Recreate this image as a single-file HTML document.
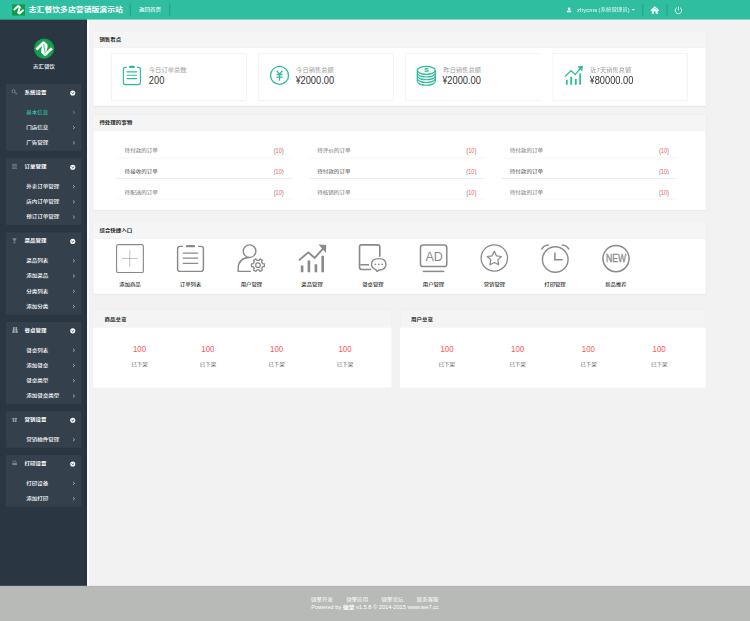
<!DOCTYPE html>
<html lang="zh-CN">
<head>
<meta charset="utf-8">
<title>志汇餐饮多店营销版演示站</title>
<style>
html,body{margin:0;padding:0;background:#f2f2f2;}
body{width:750px;height:621px;overflow:hidden;position:relative;}
#page{position:absolute;left:0;top:0;width:1920px;height:1590px;transform:scale(0.390625);transform-origin:0 0;
 font-family:"Liberation Sans","Noto Sans CJK SC",sans-serif;}
#page div,#page svg{position:absolute;box-sizing:border-box;}
#page svg{overflow:visible;}
#page .t{white-space:nowrap;}
</style>
</head>
<body>
<div id="page">
<div style="left:0px;top:0px;width:1920px;height:1589.76px;background:#f2f2f2;"></div>
<div style="left:0px;top:48.64px;width:222.59px;height:1451.52px;background:linear-gradient(90deg,#2b3643 0,#2b3643 96%,#263140 100%);"></div>
<div style="left:222.59px;top:48.64px;width:5.76px;height:1451.52px;background:#fff;"></div>
<svg style="left:81.92px;top:92.16px;" width="61.44" height="66.56" viewBox="32 36 24 26"><circle cx="44.1" cy="48.65" r="10.1" fill="#12a04a"/><path d="M36.4 49.6 L43.6 42.6" stroke="#fff" stroke-width="2.7" fill="none"/><path d="M43.5 40.9 L47.5 44.6 L47.5 47.4 L45.0 56.6 L41.2 52.9 L41.2 49.6 Z" fill="#fff"/><path d="M44.9 55.0 L51.9 48.4" stroke="#fff" stroke-width="2.7" fill="none"/><path d="M43.6 44.0 L45.2 53.6" stroke="#5fc487" stroke-width="1.1" fill="none"/></svg>
<div class="t" style="left:35.58px;top:160.51px;width:153.60px;line-height:21px;font-size:14px;color:#fff;font-weight:500;text-align:center;transform:scale(1,0.78);transform-origin:50% 50%;">志汇餐饮</div>
<div style="left:15.36px;top:215.3px;width:192.26px;height:170.5px;background:#35404d;border-radius:2px;"></div>
<svg style="left:28.16px;top:227.07px;" width="20.48" height="17.92" viewBox="11 88.7 8 7"><circle cx="13.6" cy="91.2" r="1.5" fill="none" stroke="#7d8793" stroke-width="0.9"/><path d="M14.8 92.2 L17.4 94.4 M16.3 93.6 L15.6 94.4" stroke="#7d8793" stroke-width="0.9" fill="none"/></svg>
<div class="t" style="left:62.98px;top:225.79px;width:600.00px;line-height:21px;font-size:14px;color:#fff;font-weight:bold;text-align:left;transform:scale(1,0.78);transform-origin:0 50%;">系统设置</div>
<svg style="left:176.64px;top:227.07px;" width="20.48" height="20.48" viewBox="69 88.7 8 8"><circle cx="72.6" cy="93" r="2.55" fill="#fff"/><path d="M71.4 92.5 L72.6 93.7 L73.8 92.5" fill="none" stroke="#35404d" stroke-width="0.9"/></svg>
<div class="t" style="left:67.33px;top:276.92px;width:600.00px;line-height:21px;font-size:14px;color:#2fc6a4;font-weight:500;text-align:left;transform:scale(1.01,0.78);transform-origin:0 50%;">基本信息</div>
<svg style="left:184.32px;top:279.74px;" width="10.24" height="15.36" viewBox="72 109.275 4 6"><path d="M73.3 110.925 L74.7 112.275 L73.3 113.625" fill="none" stroke="#2fc6a4" stroke-width="0.75"/></svg>
<div class="t" style="left:67.33px;top:315.96px;width:600.00px;line-height:21px;font-size:14px;color:#fff;font-weight:500;text-align:left;transform:scale(1.01,0.78);transform-origin:0 50%;">门店信息</div>
<svg style="left:184.32px;top:318.78px;" width="10.24" height="15.36" viewBox="72 124.525 4 6"><path d="M73.3 126.175 L74.7 127.525 L73.3 128.875" fill="none" stroke="#d4d8dc" stroke-width="0.75"/></svg>
<div class="t" style="left:67.33px;top:355.00px;width:600.00px;line-height:21px;font-size:14px;color:#fff;font-weight:500;text-align:left;transform:scale(1.01,0.78);transform-origin:0 50%;">广告管理</div>
<svg style="left:184.32px;top:357.82px;" width="10.24" height="15.36" viewBox="72 139.775 4 6"><path d="M73.3 141.425 L74.7 142.775 L73.3 144.125" fill="none" stroke="#d4d8dc" stroke-width="0.75"/></svg>
<div style="left:15.36px;top:405.25px;width:192.26px;height:170.5px;background:#35404d;border-radius:2px;"></div>
<svg style="left:28.16px;top:417.02px;" width="20.48" height="17.92" viewBox="11 162.9 8 7"><path d="M12.0 164.4 H17.0 M12.0 165.75 H17.0 M12.0 167.1 H17.0 M12.0 168.45 H17.0" stroke="#8d96a0" stroke-width="0.6" fill="none"/></svg>
<div class="t" style="left:62.98px;top:415.74px;width:600.00px;line-height:21px;font-size:14px;color:#fff;font-weight:bold;text-align:left;transform:scale(1,0.78);transform-origin:0 50%;">订单管理</div>
<svg style="left:176.64px;top:417.02px;" width="20.48" height="20.48" viewBox="69 162.9 8 8"><circle cx="72.6" cy="167.2" r="2.55" fill="#fff"/><path d="M71.4 166.7 L72.6 167.9 L73.8 166.7" fill="none" stroke="#35404d" stroke-width="0.9"/></svg>
<div class="t" style="left:67.33px;top:466.88px;width:600.00px;line-height:21px;font-size:14px;color:#fff;font-weight:500;text-align:left;transform:scale(1.01,0.78);transform-origin:0 50%;">外卖订单管理</div>
<svg style="left:184.32px;top:469.7px;" width="10.24" height="15.36" viewBox="72 183.475 4 6"><path d="M73.3 185.125 L74.7 186.475 L73.3 187.825" fill="none" stroke="#d4d8dc" stroke-width="0.75"/></svg>
<div class="t" style="left:67.33px;top:505.92px;width:600.00px;line-height:21px;font-size:14px;color:#fff;font-weight:500;text-align:left;transform:scale(1.01,0.78);transform-origin:0 50%;">店内订单管理</div>
<svg style="left:184.32px;top:508.74px;" width="10.24" height="15.36" viewBox="72 198.725 4 6"><path d="M73.3 200.375 L74.7 201.725 L73.3 203.075" fill="none" stroke="#d4d8dc" stroke-width="0.75"/></svg>
<div class="t" style="left:67.33px;top:544.96px;width:600.00px;line-height:21px;font-size:14px;color:#fff;font-weight:500;text-align:left;transform:scale(1.01,0.78);transform-origin:0 50%;">预订订单管理</div>
<svg style="left:184.32px;top:547.78px;" width="10.24" height="15.36" viewBox="72 213.975 4 6"><path d="M73.3 215.625 L74.7 216.975 L73.3 218.325" fill="none" stroke="#d4d8dc" stroke-width="0.75"/></svg>
<div style="left:15.36px;top:595.2px;width:192.26px;height:209.54px;background:#35404d;border-radius:2px;"></div>
<svg style="left:28.16px;top:606.98px;" width="20.48" height="17.92" viewBox="11 237.1 8 7"><path d="M12.6 238.2 H16.6 L15.6 240.8 H13.6 Z" fill="#7d8793"/><path d="M14.6 240.6 V242.8 M13.2 242.9 H16" stroke="#7d8793" stroke-width="0.7"/></svg>
<div class="t" style="left:62.98px;top:605.69px;width:600.00px;line-height:21px;font-size:14px;color:#fff;font-weight:bold;text-align:left;transform:scale(1,0.78);transform-origin:0 50%;">菜品管理</div>
<svg style="left:176.64px;top:606.98px;" width="20.48" height="20.48" viewBox="69 237.1 8 8"><circle cx="72.6" cy="241.4" r="2.55" fill="#fff"/><path d="M71.4 240.9 L72.6 242.1 L73.8 240.9" fill="none" stroke="#35404d" stroke-width="0.9"/></svg>
<div class="t" style="left:67.33px;top:656.83px;width:600.00px;line-height:21px;font-size:14px;color:#fff;font-weight:500;text-align:left;transform:scale(1.01,0.78);transform-origin:0 50%;">菜品列表</div>
<svg style="left:184.32px;top:659.65px;" width="10.24" height="15.36" viewBox="72 257.675 4 6"><path d="M73.3 259.325 L74.7 260.675 L73.3 262.025" fill="none" stroke="#d4d8dc" stroke-width="0.75"/></svg>
<div class="t" style="left:67.33px;top:695.87px;width:600.00px;line-height:21px;font-size:14px;color:#fff;font-weight:500;text-align:left;transform:scale(1.01,0.78);transform-origin:0 50%;">添加菜品</div>
<svg style="left:184.32px;top:698.69px;" width="10.24" height="15.36" viewBox="72 272.925 4 6"><path d="M73.3 274.575 L74.7 275.925 L73.3 277.275" fill="none" stroke="#d4d8dc" stroke-width="0.75"/></svg>
<div class="t" style="left:67.33px;top:734.91px;width:600.00px;line-height:21px;font-size:14px;color:#fff;font-weight:500;text-align:left;transform:scale(1.01,0.78);transform-origin:0 50%;">分类列表</div>
<svg style="left:184.32px;top:737.73px;" width="10.24" height="15.36" viewBox="72 288.175 4 6"><path d="M73.3 289.825 L74.7 291.175 L73.3 292.525" fill="none" stroke="#d4d8dc" stroke-width="0.75"/></svg>
<div class="t" style="left:67.33px;top:773.95px;width:600.00px;line-height:21px;font-size:14px;color:#fff;font-weight:500;text-align:left;transform:scale(1.01,0.78);transform-origin:0 50%;">添加分类</div>
<svg style="left:184.32px;top:776.77px;" width="10.24" height="15.36" viewBox="72 303.425 4 6"><path d="M73.3 305.075 L74.7 306.425 L73.3 307.775" fill="none" stroke="#d4d8dc" stroke-width="0.75"/></svg>
<div style="left:15.36px;top:824.19px;width:192.26px;height:209.54px;background:#35404d;border-radius:2px;"></div>
<svg style="left:28.16px;top:835.97px;" width="20.48" height="17.92" viewBox="11 326.55 8 7"><path d="M12.3 332.95 L13.2 327.05 H14.7 V332.95 Z M15.5 327.05 H17 L17.9 332.95 H15.5 Z" fill="#9aa3ad"/></svg>
<div class="t" style="left:62.98px;top:834.68px;width:600.00px;line-height:21px;font-size:14px;color:#fff;font-weight:bold;text-align:left;transform:scale(1,0.78);transform-origin:0 50%;">餐桌管理</div>
<svg style="left:176.64px;top:835.97px;" width="20.48" height="20.48" viewBox="69 326.55 8 8"><circle cx="72.6" cy="330.85" r="2.55" fill="#fff"/><path d="M71.4 330.35 L72.6 331.55 L73.8 330.35" fill="none" stroke="#35404d" stroke-width="0.9"/></svg>
<div class="t" style="left:67.33px;top:885.82px;width:600.00px;line-height:21px;font-size:14px;color:#fff;font-weight:500;text-align:left;transform:scale(1.01,0.78);transform-origin:0 50%;">餐桌列表</div>
<svg style="left:184.32px;top:888.64px;" width="10.24" height="15.36" viewBox="72 347.125 4 6"><path d="M73.3 348.775 L74.7 350.125 L73.3 351.475" fill="none" stroke="#d4d8dc" stroke-width="0.75"/></svg>
<div class="t" style="left:67.33px;top:924.86px;width:600.00px;line-height:21px;font-size:14px;color:#fff;font-weight:500;text-align:left;transform:scale(1.01,0.78);transform-origin:0 50%;">添加餐桌</div>
<svg style="left:184.32px;top:927.68px;" width="10.24" height="15.36" viewBox="72 362.375 4 6"><path d="M73.3 364.025 L74.7 365.375 L73.3 366.725" fill="none" stroke="#d4d8dc" stroke-width="0.75"/></svg>
<div class="t" style="left:67.33px;top:963.90px;width:600.00px;line-height:21px;font-size:14px;color:#fff;font-weight:500;text-align:left;transform:scale(1.01,0.78);transform-origin:0 50%;">餐桌类型</div>
<svg style="left:184.32px;top:966.72px;" width="10.24" height="15.36" viewBox="72 377.625 4 6"><path d="M73.3 379.275 L74.7 380.625 L73.3 381.975" fill="none" stroke="#d4d8dc" stroke-width="0.75"/></svg>
<div class="t" style="left:67.33px;top:1002.94px;width:600.00px;line-height:21px;font-size:14px;color:#fff;font-weight:500;text-align:left;transform:scale(1.01,0.78);transform-origin:0 50%;">添加餐桌类型</div>
<svg style="left:184.32px;top:1005.76px;" width="10.24" height="15.36" viewBox="72 392.875 4 6"><path d="M73.3 394.525 L74.7 395.875 L73.3 397.225" fill="none" stroke="#d4d8dc" stroke-width="0.75"/></svg>
<div style="left:15.36px;top:1053.18px;width:192.26px;height:92.42px;background:#35404d;border-radius:2px;"></div>
<svg style="left:28.16px;top:1064.96px;" width="20.48" height="17.92" viewBox="11 416 8 7"><path d="M12.3 418.1 H17.1 V419.3 H12.3 Z M12.8 419.6 H16.6 V421.9 H12.8 Z" fill="#9aa3ad"/><path d="M14.7 418.1 V421.9" stroke="#35404d" stroke-width="0.7"/></svg>
<div class="t" style="left:62.98px;top:1063.68px;width:600.00px;line-height:21px;font-size:14px;color:#fff;font-weight:bold;text-align:left;transform:scale(1,0.78);transform-origin:0 50%;">营销设置</div>
<svg style="left:176.64px;top:1064.96px;" width="20.48" height="20.48" viewBox="69 416 8 8"><circle cx="72.6" cy="420.3" r="2.55" fill="#fff"/><path d="M71.4 419.8 L72.6 421 L73.8 419.8" fill="none" stroke="#35404d" stroke-width="0.9"/></svg>
<div class="t" style="left:67.33px;top:1114.81px;width:600.00px;line-height:21px;font-size:14px;color:#fff;font-weight:500;text-align:left;transform:scale(1.01,0.78);transform-origin:0 50%;">营销插件管理</div>
<svg style="left:184.32px;top:1117.63px;" width="10.24" height="15.36" viewBox="72 436.575 4 6"><path d="M73.3 438.225 L74.7 439.575 L73.3 440.925" fill="none" stroke="#d4d8dc" stroke-width="0.75"/></svg>
<div style="left:15.36px;top:1165.06px;width:192.26px;height:131.46px;background:#35404d;border-radius:2px;"></div>
<svg style="left:28.16px;top:1176.83px;" width="20.48" height="17.92" viewBox="11 459.7 8 7"><path d="M13.2 462.8 V461 H16 V462.8" fill="none" stroke="#7d8793" stroke-width="0.7"/><rect x="12.4" y="463" width="4.6" height="2" fill="#7d8793"/></svg>
<div class="t" style="left:62.98px;top:1175.55px;width:600.00px;line-height:21px;font-size:14px;color:#fff;font-weight:bold;text-align:left;transform:scale(1,0.78);transform-origin:0 50%;">打印设置</div>
<svg style="left:176.64px;top:1176.83px;" width="20.48" height="20.48" viewBox="69 459.7 8 8"><circle cx="72.6" cy="464" r="2.55" fill="#fff"/><path d="M71.4 463.5 L72.6 464.7 L73.8 463.5" fill="none" stroke="#35404d" stroke-width="0.9"/></svg>
<div class="t" style="left:67.33px;top:1226.68px;width:600.00px;line-height:21px;font-size:14px;color:#fff;font-weight:500;text-align:left;transform:scale(1.01,0.78);transform-origin:0 50%;">打印设备</div>
<svg style="left:184.32px;top:1229.5px;" width="10.24" height="15.36" viewBox="72 480.275 4 6"><path d="M73.3 481.925 L74.7 483.275 L73.3 484.625" fill="none" stroke="#d4d8dc" stroke-width="0.75"/></svg>
<div class="t" style="left:67.33px;top:1265.72px;width:600.00px;line-height:21px;font-size:14px;color:#fff;font-weight:500;text-align:left;transform:scale(1.01,0.78);transform-origin:0 50%;">添加打印</div>
<svg style="left:184.32px;top:1268.54px;" width="10.24" height="15.36" viewBox="72 495.525 4 6"><path d="M73.3 497.175 L74.7 498.525 L73.3 499.875" fill="none" stroke="#d4d8dc" stroke-width="0.75"/></svg>
<div style="left:0px;top:0px;width:1920px;height:49.66px;background:#30bea0;"></div>
<div style="left:30.72px;top:10.75px;width:33.54px;height:29.44px;background:#0d9e4a;"></div>
<svg style="left:30.72px;top:10.24px;" width="33.28" height="30.21" viewBox="12 4 13 11.8"><path d="M13.7 10.1 L18.1 6.1 L19.7 7.6 L18.1 12.5 L19.4 13.6 L23.5 9.9" fill="none" stroke="#fff" stroke-width="2.0" stroke-linejoin="round"/></svg>
<div class="t" style="left:73.47px;top:9.45px;width:600.00px;line-height:30px;font-size:20px;color:#fff;font-weight:bold;text-align:left;letter-spacing:0.1px;transform:scale(1,0.86);transform-origin:0 50%;">志汇餐饮多店营销版演示站</div>
<div style="left:332.29px;top:8.7px;width:3.07px;height:31.23px;background:#25a386;"></div>
<div class="t" style="left:355.84px;top:15.10px;width:600.00px;line-height:21px;font-size:14px;color:#fff;font-weight:500;text-align:left;transform:scale(1,0.78);transform-origin:0 50%;">返回首页</div>
<div style="left:432.9px;top:8.7px;width:3.07px;height:31.23px;background:#25a386;"></div>
<svg style="left:1446.4px;top:15.36px;" width="20.48" height="20.48" viewBox="565 6 8 8"><circle cx="569.3" cy="8.9" r="1.25" fill="#f2fbf9"/><path d="M566.9 12.4 Q566.9 10.5 569.3 10.5 Q571.7 10.5 571.7 12.4 Z" fill="#f2fbf9"/></svg>
<div class="t" style="left:1476.61px;top:15.23px;width:600.00px;line-height:21px;font-size:14px;color:#effaf7;font-weight:normal;text-align:left;"><span style="display:inline-block;transform:scale(1.09,1.08);transform-origin:0 60%;margin-right:4.5px;">zhycms</span> (<span style="display:inline-block;transform:scaleY(0.78);">系统管理员</span>)</div>
<svg style="left:1615.36px;top:17.92px;" width="12.8" height="15.36" viewBox="631 7 5 6"><path d="M631.8 9 H635 L633.4 10.8 Z" fill="#e8f8f4"/></svg>
<div style="left:1644.03px;top:8.7px;width:3.07px;height:31.23px;background:#25a386;"></div>
<svg style="left:1664px;top:12.8px;" width="25.6" height="25.6" viewBox="650 5 10 10"><path d="M650.4 10.2 L654.8 6.2 L659.2 10.2 L658.4 10.9 L654.8 7.7 L651.2 10.9 Z" fill="#fff"/><path d="M651.8 10.6 L654.8 8.2 L657.8 10.6 V13.6 H655.7 V11.4 H653.9 V13.6 H651.8 Z" fill="#fff"/></svg>
<div style="left:1705.98px;top:8.7px;width:3.07px;height:31.23px;background:#25a386;"></div>
<svg style="left:1725.44px;top:12.8px;" width="25.6" height="25.6" viewBox="674 5 10 10"><path d="M676.9 7.7 A3.2 3.2 0 1 0 680.3 7.7" fill="none" stroke="#e9f9f5" stroke-width="1"/><path d="M678.6 6.7 V10.3" stroke="#e9f9f5" stroke-width="1"/></svg>
<div style="left:0px;top:1499.65px;width:1920px;height:90.11px;background:#b8bab8;border-top:1px solid #a9aba9;"></div>
<div class="t" style="left:796.42px;top:1524.73px;width:600.00px;line-height:21px;font-size:14px;color:#fff;font-weight:normal;text-align:left;transform:scale(1,0.78);transform-origin:0 50%;">微擎开发</div>
<div class="t" style="left:886.53px;top:1524.73px;width:600.00px;line-height:21px;font-size:14px;color:#fff;font-weight:normal;text-align:left;transform:scale(1,0.78);transform-origin:0 50%;">微擎应用</div>
<div class="t" style="left:976.64px;top:1524.73px;width:600.00px;line-height:21px;font-size:14px;color:#fff;font-weight:normal;text-align:left;transform:scale(1,0.78);transform-origin:0 50%;">微擎论坛</div>
<div class="t" style="left:1066.75px;top:1524.73px;width:600.00px;line-height:21px;font-size:14px;color:#fff;font-weight:normal;text-align:left;transform:scale(1,0.78);transform-origin:0 50%;">联系客服</div>
<div class="t" style="left:796.93px;top:1543.93px;width:600.00px;line-height:21px;font-size:14px;color:#fff;font-weight:normal;text-align:left;transform:scale(1.04,1.05);transform-origin:0 50%;">Powered by <b><span style="display:inline-block;transform:scaleY(0.78);">微擎</span></b> v1.5.8 © 2014-2015 www.we7.cc</div>
<div style="left:238.34px;top:80.64px;width:1569.54px;height:191.23px;background:#fff;border:1px solid #e7e7e7;border-radius:4px;box-shadow:0 1px 1px rgba(0,0,0,.05);overflow:hidden;"><div style="left:0;top:0;right:0;height:40.45px;background:#f5f5f5;border-bottom:1px solid #e7e7e7;"></div></div>
<div class="t" style="left:254.46px;top:91.77px;width:600.00px;line-height:21px;font-size:14px;color:#222;font-weight:bold;text-align:left;transform:scale(1,0.78);transform-origin:0 50%;">销售看点</div>
<div style="left:284.93px;top:137.22px;width:345.86px;height:119.42px;background:#fff;border:1px solid #e4e4e4;"></div>
<div class="t" style="left:381.44px;top:167.97px;width:600.00px;line-height:24px;font-size:16px;color:#999;font-weight:normal;text-align:left;transform:scale(1.005,0.88);transform-origin:0 50%;">今日订单总数</div>
<div class="t" style="left:380.93px;top:183.56px;width:600.00px;line-height:43px;font-size:28.5px;color:#333;font-weight:normal;text-align:left;transform:scale(0.835,1);transform-origin:0 50%;">200</div>
<svg style="left:312.32px;top:163.84px;" width="53.76" height="58.88" viewBox="122 64 21 23"><path d="M137.2 67.3 H138.5 Q140.5 67.3 140.5 69.3 V82.5 Q140.5 84.5 138.5 84.5 H125.5 Q123.5 84.5 123.5 82.5 V69.3 Q123.5 67.3 125.5 67.3 H126.8" fill="none" stroke="#2bbb9b" stroke-width="1.15"/><rect x="129.1" y="65.8" width="5.8" height="2.1" rx="1" fill="#2bbb9b"/><path d="M126.8 71.8 H137.2 M126.8 75.2 H137.2 M126.8 78.6 H137.2" stroke="#2bbb9b" stroke-width="1.15" fill="none"/></svg>
<div style="left:661.5px;top:137.22px;width:345.86px;height:119.42px;background:#fff;border:1px solid #e4e4e4;"></div>
<div class="t" style="left:758.02px;top:167.97px;width:600.00px;line-height:24px;font-size:16px;color:#999;font-weight:normal;text-align:left;transform:scale(1.005,0.88);transform-origin:0 50%;">今日销售总额</div>
<div class="t" style="left:755.71px;top:183.56px;width:600.00px;line-height:43px;font-size:28.5px;color:#333;font-weight:normal;text-align:left;transform:scale(0.835,1);transform-origin:0 50%;"><span style="display:inline-block;transform:scaleX(.92);transform-origin:100% 50%;">¥</span>2000.00</div>
<svg style="left:688.9px;top:163.84px;" width="53.76" height="58.88" viewBox="269.1 64 21 23"><circle cx="279.5" cy="75.4" r="9" fill="none" stroke="#2bbb9b" stroke-width="1.3"/><path d="M276.7 70.6 L279.5 74.3 L282.3 70.6 M279.5 74.3 V80.7 M276.5 74.5 H282.5 M276.5 77.1 H282.5" fill="none" stroke="#2bbb9b" stroke-width="1.25"/></svg>
<div style="left:1038.08px;top:137.22px;width:345.86px;height:119.42px;background:#fff;border:1px solid #e4e4e4;border-right:none;"></div>
<div class="t" style="left:1134.59px;top:167.97px;width:600.00px;line-height:24px;font-size:16px;color:#999;font-weight:normal;text-align:left;transform:scale(1.005,0.88);transform-origin:0 50%;">昨日销售总额</div>
<div class="t" style="left:1132.29px;top:183.56px;width:600.00px;line-height:43px;font-size:28.5px;color:#333;font-weight:normal;text-align:left;transform:scale(0.835,1);transform-origin:0 50%;"><span style="display:inline-block;transform:scaleX(.92);transform-origin:100% 50%;">¥</span>2000.00</div>
<svg style="left:1065.47px;top:163.84px;" width="53.76" height="58.88" viewBox="416.2 64 21 23"><ellipse cx="426.5" cy="70.3" rx="9" ry="3.9" fill="none" stroke="#2bbb9b" stroke-width="1.25"/><path d="M417.5 70.3 V81.3 M435.5 70.3 V81.3" fill="none" stroke="#2bbb9b" stroke-width="1.25"/><path d="M417.5 73.05 A9 3.9 0 0 0 435.5 73.05" fill="none" stroke="#2bbb9b" stroke-width="1.2"/><path d="M417.5 75.8 A9 3.9 0 0 0 435.5 75.8" fill="none" stroke="#2bbb9b" stroke-width="1.2"/><path d="M417.5 78.55 A9 3.9 0 0 0 435.5 78.55" fill="none" stroke="#2bbb9b" stroke-width="1.2"/><path d="M417.5 81.3 A9 3.9 0 0 0 435.5 81.3" fill="none" stroke="#2bbb9b" stroke-width="1.2"/><text x="426.6" y="72.4" font-family="Liberation Sans, sans-serif" font-weight="bold" font-size="5.8" fill="#2bbb9b" text-anchor="middle" textLength="4.8" lengthAdjust="spacingAndGlyphs">$</text></svg>
<div style="left:1414.66px;top:137.22px;width:345.86px;height:119.42px;background:#fff;border:1px solid #e4e4e4;"></div>
<div class="t" style="left:1511.17px;top:167.97px;width:600.00px;line-height:24px;font-size:16px;color:#999;font-weight:normal;text-align:left;transform:scale(1.005,0.88);transform-origin:0 50%;">近7天销售总额</div>
<div class="t" style="left:1508.86px;top:183.56px;width:600.00px;line-height:43px;font-size:28.5px;color:#333;font-weight:normal;text-align:left;transform:scale(0.835,1);transform-origin:0 50%;"><span style="display:inline-block;transform:scaleX(.92);transform-origin:100% 50%;">¥</span>80000.00</div>
<svg style="left:1442.05px;top:163.84px;" width="53.76" height="58.88" viewBox="563.3 64 21 23"><path d="M566.8 79.8 V84.8 M571.2 76.6 V84.8 M575.8 79 V84.8 M580.2 73.4 V84.8" stroke="#2bbb9b" stroke-width="1.8" fill="none"/><path d="M565.2 76.4 L571 70.6 L575.2 74.6 L581 67.6" fill="none" stroke="#2bbb9b" stroke-width="1.3"/><path d="M577.4 66.4 L582.9 65.8 L582.3 71.2 Z" fill="#2bbb9b"/></svg>
<div style="left:238.34px;top:292.61px;width:1569.54px;height:244.99px;background:#fff;border:1px solid #e7e7e7;border-radius:4px;box-shadow:0 1px 1px rgba(0,0,0,.05);overflow:hidden;"><div style="left:0;top:0;right:0;height:40.45px;background:#f5f5f5;border-bottom:1px solid #e7e7e7;"></div></div>
<div class="t" style="left:254.46px;top:303.74px;width:600.00px;line-height:21px;font-size:14px;color:#222;font-weight:bold;text-align:left;transform:scale(1,0.78);transform-origin:0 50%;">待处理的事物</div>
<div style="left:299.26px;top:403.71px;width:446.98px;height:1.02px;background:#e6e6e6;"></div>
<div class="t" style="left:319.23px;top:375.29px;width:600.00px;line-height:21px;font-size:14px;color:#6a6a6a;font-weight:normal;text-align:left;transform:scale(1.015,0.8);transform-origin:0 50%;">待付款的订单</div>
<div class="t" style="left:624.38px;top:373.54px;width:102.40px;line-height:24px;font-size:16px;color:#f55;font-weight:normal;text-align:right;transform:scale(0.9,1.12);transform-origin:100% 50%;"><span style="color:#777">(</span>10<span style="color:#777">)</span></div>
<div style="left:299.26px;top:456.32px;width:446.98px;height:1.02px;background:#cfcfcf;"></div>
<div class="t" style="left:319.23px;top:428.54px;width:600.00px;line-height:21px;font-size:14px;color:#444;font-weight:normal;text-align:left;transform:scale(1.015,0.8);transform-origin:0 50%;">待接收的订单</div>
<div class="t" style="left:624.38px;top:426.78px;width:102.40px;line-height:24px;font-size:16px;color:#f55;font-weight:normal;text-align:right;transform:scale(0.9,1.12);transform-origin:100% 50%;"><span style="color:#777">(</span>10<span style="color:#777">)</span></div>
<div style="left:299.26px;top:509.44px;width:446.98px;height:1.02px;background:#e6e6e6;"></div>
<div class="t" style="left:319.23px;top:482.56px;width:600.00px;line-height:21px;font-size:14px;color:#6a6a6a;font-weight:normal;text-align:left;transform:scale(1.015,0.8);transform-origin:0 50%;">待配送的订单</div>
<div class="t" style="left:624.38px;top:480.80px;width:102.40px;line-height:24px;font-size:16px;color:#f55;font-weight:normal;text-align:right;transform:scale(0.9,1.12);transform-origin:100% 50%;"><span style="color:#777">(</span>10<span style="color:#777">)</span></div>
<div style="left:791.94px;top:403.71px;width:446.98px;height:1.02px;background:#e6e6e6;"></div>
<div class="t" style="left:811.90px;top:375.29px;width:600.00px;line-height:21px;font-size:14px;color:#6a6a6a;font-weight:normal;text-align:left;transform:scale(1.015,0.8);transform-origin:0 50%;">待评价的订单</div>
<div class="t" style="left:1117.06px;top:373.54px;width:102.40px;line-height:24px;font-size:16px;color:#f55;font-weight:normal;text-align:right;transform:scale(0.9,1.12);transform-origin:100% 50%;"><span style="color:#777">(</span>10<span style="color:#777">)</span></div>
<div style="left:791.94px;top:456.32px;width:446.98px;height:1.02px;background:#cfcfcf;"></div>
<div class="t" style="left:811.90px;top:428.54px;width:600.00px;line-height:21px;font-size:14px;color:#444;font-weight:normal;text-align:left;transform:scale(1.015,0.8);transform-origin:0 50%;">待付款的订单</div>
<div class="t" style="left:1117.06px;top:426.78px;width:102.40px;line-height:24px;font-size:16px;color:#f55;font-weight:normal;text-align:right;transform:scale(0.9,1.12);transform-origin:100% 50%;"><span style="color:#777">(</span>10<span style="color:#777">)</span></div>
<div style="left:791.94px;top:509.44px;width:446.98px;height:1.02px;background:#e6e6e6;"></div>
<div class="t" style="left:811.90px;top:482.56px;width:600.00px;line-height:21px;font-size:14px;color:#6a6a6a;font-weight:normal;text-align:left;transform:scale(1.015,0.8);transform-origin:0 50%;">待核销的订单</div>
<div class="t" style="left:1117.06px;top:480.80px;width:102.40px;line-height:24px;font-size:16px;color:#f55;font-weight:normal;text-align:right;transform:scale(0.9,1.12);transform-origin:100% 50%;"><span style="color:#777">(</span>10<span style="color:#777">)</span></div>
<div style="left:1284.61px;top:403.71px;width:446.98px;height:1.02px;background:#e6e6e6;"></div>
<div class="t" style="left:1304.58px;top:375.29px;width:600.00px;line-height:21px;font-size:14px;color:#6a6a6a;font-weight:normal;text-align:left;transform:scale(1.015,0.8);transform-origin:0 50%;">待付款的订单</div>
<div class="t" style="left:1609.73px;top:373.54px;width:102.40px;line-height:24px;font-size:16px;color:#f55;font-weight:normal;text-align:right;transform:scale(0.9,1.12);transform-origin:100% 50%;"><span style="color:#777">(</span>10<span style="color:#777">)</span></div>
<div style="left:1284.61px;top:456.32px;width:446.98px;height:1.02px;background:#cfcfcf;"></div>
<div class="t" style="left:1304.58px;top:428.54px;width:600.00px;line-height:21px;font-size:14px;color:#444;font-weight:normal;text-align:left;transform:scale(1.015,0.8);transform-origin:0 50%;">待付款的订单</div>
<div class="t" style="left:1609.73px;top:426.78px;width:102.40px;line-height:24px;font-size:16px;color:#f55;font-weight:normal;text-align:right;transform:scale(0.9,1.12);transform-origin:100% 50%;"><span style="color:#777">(</span>10<span style="color:#777">)</span></div>
<div style="left:1284.61px;top:509.44px;width:446.98px;height:1.02px;background:#e6e6e6;"></div>
<div class="t" style="left:1304.58px;top:482.56px;width:600.00px;line-height:21px;font-size:14px;color:#6a6a6a;font-weight:normal;text-align:left;transform:scale(1.015,0.8);transform-origin:0 50%;">待付款的订单</div>
<div class="t" style="left:1609.73px;top:480.80px;width:102.40px;line-height:24px;font-size:16px;color:#f55;font-weight:normal;text-align:right;transform:scale(0.9,1.12);transform-origin:100% 50%;"><span style="color:#777">(</span>10<span style="color:#777">)</span></div>
<div style="left:238.34px;top:569.09px;width:1569.54px;height:183.55px;background:#fff;border:1px solid #e7e7e7;border-radius:4px;box-shadow:0 1px 1px rgba(0,0,0,.05);overflow:hidden;"><div style="left:0;top:0;right:0;height:40.45px;background:#f5f5f5;border-bottom:1px solid #e7e7e7;"></div></div>
<div class="t" style="left:254.46px;top:580.22px;width:600.00px;line-height:21px;font-size:14px;color:#222;font-weight:bold;text-align:left;transform:scale(1,0.78);transform-origin:0 50%;">综合快捷入口</div>
<div class="t" style="left:256.00px;top:717.82px;width:153.60px;line-height:21px;font-size:14px;color:#2a2a2a;font-weight:500;text-align:center;transform:scale(0.98,0.78);transform-origin:50% 50%;">添加商品</div>
<div class="t" style="left:411.44px;top:717.82px;width:153.60px;line-height:21px;font-size:14px;color:#2a2a2a;font-weight:500;text-align:center;transform:scale(0.98,0.78);transform-origin:50% 50%;">订单列表</div>
<div class="t" style="left:566.89px;top:717.82px;width:153.60px;line-height:21px;font-size:14px;color:#2a2a2a;font-weight:500;text-align:center;transform:scale(0.98,0.78);transform-origin:50% 50%;">用户管理</div>
<div class="t" style="left:722.33px;top:717.82px;width:153.60px;line-height:21px;font-size:14px;color:#2a2a2a;font-weight:500;text-align:center;transform:scale(0.98,0.78);transform-origin:50% 50%;">菜品管理</div>
<div class="t" style="left:877.77px;top:717.82px;width:153.60px;line-height:21px;font-size:14px;color:#2a2a2a;font-weight:500;text-align:center;transform:scale(0.98,0.78);transform-origin:50% 50%;">餐桌管理</div>
<div class="t" style="left:1033.22px;top:717.82px;width:153.60px;line-height:21px;font-size:14px;color:#2a2a2a;font-weight:500;text-align:center;transform:scale(0.98,0.78);transform-origin:50% 50%;">用户管理</div>
<div class="t" style="left:1188.66px;top:717.82px;width:153.60px;line-height:21px;font-size:14px;color:#2a2a2a;font-weight:500;text-align:center;transform:scale(0.98,0.78);transform-origin:50% 50%;">营销管理</div>
<div class="t" style="left:1344.10px;top:717.82px;width:153.60px;line-height:21px;font-size:14px;color:#2a2a2a;font-weight:500;text-align:center;transform:scale(0.98,0.78);transform-origin:50% 50%;">打印管理</div>
<div class="t" style="left:1499.55px;top:717.82px;width:153.60px;line-height:21px;font-size:14px;color:#2a2a2a;font-weight:500;text-align:center;transform:scale(0.98,0.78);transform-origin:50% 50%;">新品推荐</div>
<svg style="left:291.84px;top:619.52px;" width="81.92" height="84.48" viewBox="114 242 32 33"><rect x="116.5" y="244.5" width="26.8" height="27.8" rx="1.6" fill="none" stroke="#8a8a8a" stroke-width="1.15"/><path d="M121.8 258.3 H137.6 M129.7 250 V266.5" stroke="#9a9a9a" stroke-width="0.6" fill="none"/></svg>
<svg style="left:448px;top:622.08px;" width="81.92" height="81.92" viewBox="175 243 32 32"><path d="M198 246.4 H201 Q203.4 246.4 203.4 248.8 V269 Q203.4 271.4 201 271.4 H180 Q177.6 271.4 177.6 269 V248.8 Q177.6 246.4 180 246.4 H183" fill="none" stroke="#8a8a8a" stroke-width="1.45"/><rect x="186" y="245" width="9" height="2.4" rx="1.2" fill="#8a8a8a"/><path d="M182.8 253.2 H198.2 M182.8 258.2 H198.2 M182.8 263.4 H198.2" stroke="#8a8a8a" stroke-width="1.35" fill="none"/></svg>
<svg style="left:601.6px;top:622.08px;" width="84.48" height="81.92" viewBox="235 243 33 32"><circle cx="249.4" cy="251.2" r="6.3" fill="none" stroke="#8a8a8a" stroke-width="1.4"/><path d="M250.8 271.4 H238 V269 Q238 258.4 248.6 257.6" fill="none" stroke="#8a8a8a" stroke-width="1.4"/><path d="M264.26 263.83 L264.26 266.57 L262.46 266.71 L261.44 268.48 L262.22 270.10 L259.84 271.48 L258.82 269.99 L256.78 269.99 L255.76 271.48 L253.38 270.10 L254.16 268.48 L253.14 266.71 L251.34 266.57 L251.34 263.83 L253.14 263.69 L254.16 261.92 L253.38 260.30 L255.76 258.92 L256.78 260.41 L258.82 260.41 L259.84 258.92 L262.22 260.30 L261.44 261.92 L262.46 263.69 Z" fill="#fff" stroke="#8a8a8a" stroke-width="1.3" stroke-linejoin="round"/><circle cx="257.8" cy="265.2" r="2.3" fill="none" stroke="#8a8a8a" stroke-width="1.25"/></svg>
<svg style="left:757.76px;top:619.52px;" width="84.48" height="84.48" viewBox="296 242 33 33"><path d="M302 265.2 V272 M308.8 260.4 V272 M315.8 264 V272 M322.6 255.6 V272" stroke="#8a8a8a" stroke-width="2.6" fill="none"/><path d="M298.8 260.2 L308.2 252.2 L314.6 257.8 L323.6 247.6" fill="none" stroke="#8a8a8a" stroke-width="1.9"/><path d="M318.4 244.3 L326.1 244.7 L325.9 252.9 Z" fill="#8a8a8a"/></svg>
<svg style="left:913.92px;top:622.08px;" width="81.92" height="81.92" viewBox="357 243 32 32"><path d="M379.8 256.8 V247 Q379.8 244.9 377.7 244.9 H361.6 Q359.5 244.9 359.5 247 V267.4 Q359.5 269.5 361.6 269.5 H371" fill="none" stroke="#8a8a8a" stroke-width="1.65"/><path d="M360.2 264.8 H369" stroke="#8a8a8a" stroke-width="1.5"/><path d="M376 270 Q371.5 268 371.5 264.4 Q371.5 258.7 378.7 258.7 Q385.9 258.7 385.9 264.4 Q385.9 270.1 378.9 270.1 L376.9 271.5 Z" fill="#fff" stroke="#8a8a8a" stroke-width="1.4" stroke-linejoin="round"/><circle cx="375.4" cy="264.4" r="0.85" fill="#8a8a8a"/><circle cx="378.8" cy="264.4" r="0.85" fill="#8a8a8a"/><circle cx="382.2" cy="264.4" r="0.85" fill="#8a8a8a"/></svg>
<svg style="left:1067.52px;top:619.52px;" width="84.48" height="84.48" viewBox="417 242 33 33"><rect x="420.3" y="244.9" width="26.3" height="21.5" rx="2.6" fill="none" stroke="#8a8a8a" stroke-width="1.5"/><path d="M422.6 271.2 H444.2" stroke="#8a8a8a" stroke-width="1.5"/><text x="433.9" y="260.7" font-family="Liberation Sans, sans-serif" font-size="13.6" textLength="17.4" lengthAdjust="spacingAndGlyphs" fill="#8a8a8a" text-anchor="middle">AD</text></svg>
<svg style="left:1226.24px;top:619.52px;" width="79.36" height="84.48" viewBox="479 242 31 33"><circle cx="494.4" cy="257.8" r="13.2" fill="none" stroke="#8a8a8a" stroke-width="1.3"/><path d="M494.40 251.20 L496.57 255.61 L501.44 256.31 L497.92 259.74 L498.75 264.59 L494.40 262.30 L490.05 264.59 L490.88 259.74 L487.36 256.31 L492.23 255.61 Z" fill="none" stroke="#8a8a8a" stroke-width="1.25" stroke-linejoin="round"/></svg>
<svg style="left:1379.84px;top:619.52px;" width="84.48" height="84.48" viewBox="539 242 33 33"><circle cx="555.2" cy="259.3" r="12.8" fill="none" stroke="#8a8a8a" stroke-width="1.4"/><path d="M554.8 252.4 V259.6 H562.6" fill="none" stroke="#8a8a8a" stroke-width="1.5"/><path d="M541.5 249.4 Q543.2 245 548.6 244.8 M561.8 244.8 Q567.2 245 568.9 249.4" fill="none" stroke="#8a8a8a" stroke-width="1.5"/></svg>
<svg style="left:1536px;top:619.52px;" width="81.92" height="84.48" viewBox="600 242 32 33"><circle cx="616" cy="258.4" r="13.1" fill="none" stroke="#8a8a8a" stroke-width="1.5"/><text x="616" y="262.1" font-family="Liberation Sans, sans-serif" font-size="10.2" fill="#8a8a8a" stroke="#8a8a8a" stroke-width="0.3" text-anchor="middle" textLength="20.2" lengthAdjust="spacingAndGlyphs">NEW</text></svg>
<div style="left:238.08px;top:792.32px;width:764.16px;height:46.34px;background:#f4f4f4;border:1px solid #ebebeb;border-bottom:none;"></div>
<div style="left:238.08px;top:838.66px;width:764.16px;height:153.6px;background:#fff;"></div>
<div class="t" style="left:267.52px;top:807.42px;width:600.00px;line-height:21px;font-size:14px;color:#222;font-weight:bold;text-align:left;transform:scale(1,0.78);transform-origin:0 50%;">商品总览</div>
<div style="left:1024px;top:792.32px;width:783.36px;height:46.34px;background:#f4f4f4;border:1px solid #ebebeb;border-bottom:none;"></div>
<div style="left:1024px;top:838.66px;width:783.36px;height:153.6px;background:#fff;"></div>
<div class="t" style="left:1052.16px;top:807.42px;width:600.00px;line-height:21px;font-size:14px;color:#222;font-weight:bold;text-align:left;transform:scale(1,0.78);transform-origin:0 50%;">用户总览</div>
<div class="t" style="left:305.92px;top:874.17px;width:102.40px;line-height:37px;font-size:24.5px;color:#f55;font-weight:normal;text-align:center;transform:scale(0.82,1);transform-origin:50% 50%;">100</div>
<div class="t" style="left:305.92px;top:922.62px;width:102.40px;line-height:21px;font-size:14px;color:#5a5a5a;font-weight:normal;text-align:center;transform:scale(1,0.78);transform-origin:50% 50%;">已下架</div>
<div class="t" style="left:1092.61px;top:874.17px;width:102.40px;line-height:37px;font-size:24.5px;color:#f55;font-weight:normal;text-align:center;transform:scale(0.82,1);transform-origin:50% 50%;">100</div>
<div class="t" style="left:1092.61px;top:922.62px;width:102.40px;line-height:21px;font-size:14px;color:#5a5a5a;font-weight:normal;text-align:center;transform:scale(1,0.78);transform-origin:50% 50%;">已下架</div>
<div class="t" style="left:481.28px;top:874.17px;width:102.40px;line-height:37px;font-size:24.5px;color:#f55;font-weight:normal;text-align:center;transform:scale(0.82,1);transform-origin:50% 50%;">100</div>
<div class="t" style="left:481.28px;top:922.62px;width:102.40px;line-height:21px;font-size:14px;color:#5a5a5a;font-weight:normal;text-align:center;transform:scale(1,0.78);transform-origin:50% 50%;">已下架</div>
<div class="t" style="left:1273.86px;top:874.17px;width:102.40px;line-height:37px;font-size:24.5px;color:#f55;font-weight:normal;text-align:center;transform:scale(0.82,1);transform-origin:50% 50%;">100</div>
<div class="t" style="left:1273.86px;top:922.62px;width:102.40px;line-height:21px;font-size:14px;color:#5a5a5a;font-weight:normal;text-align:center;transform:scale(1,0.78);transform-origin:50% 50%;">已下架</div>
<div class="t" style="left:656.64px;top:874.17px;width:102.40px;line-height:37px;font-size:24.5px;color:#f55;font-weight:normal;text-align:center;transform:scale(0.82,1);transform-origin:50% 50%;">100</div>
<div class="t" style="left:656.64px;top:922.62px;width:102.40px;line-height:21px;font-size:14px;color:#5a5a5a;font-weight:normal;text-align:center;transform:scale(1,0.78);transform-origin:50% 50%;">已下架</div>
<div class="t" style="left:1455.10px;top:874.17px;width:102.40px;line-height:37px;font-size:24.5px;color:#f55;font-weight:normal;text-align:center;transform:scale(0.82,1);transform-origin:50% 50%;">100</div>
<div class="t" style="left:1455.10px;top:922.62px;width:102.40px;line-height:21px;font-size:14px;color:#5a5a5a;font-weight:normal;text-align:center;transform:scale(1,0.78);transform-origin:50% 50%;">已下架</div>
<div class="t" style="left:832.00px;top:874.17px;width:102.40px;line-height:37px;font-size:24.5px;color:#f55;font-weight:normal;text-align:center;transform:scale(0.82,1);transform-origin:50% 50%;">100</div>
<div class="t" style="left:832.00px;top:922.62px;width:102.40px;line-height:21px;font-size:14px;color:#5a5a5a;font-weight:normal;text-align:center;transform:scale(1,0.78);transform-origin:50% 50%;">已下架</div>
<div class="t" style="left:1636.35px;top:874.17px;width:102.40px;line-height:37px;font-size:24.5px;color:#f55;font-weight:normal;text-align:center;transform:scale(0.82,1);transform-origin:50% 50%;">100</div>
<div class="t" style="left:1636.35px;top:922.62px;width:102.40px;line-height:21px;font-size:14px;color:#5a5a5a;font-weight:normal;text-align:center;transform:scale(1,0.78);transform-origin:50% 50%;">已下架</div>
</div>
</body>
</html>
